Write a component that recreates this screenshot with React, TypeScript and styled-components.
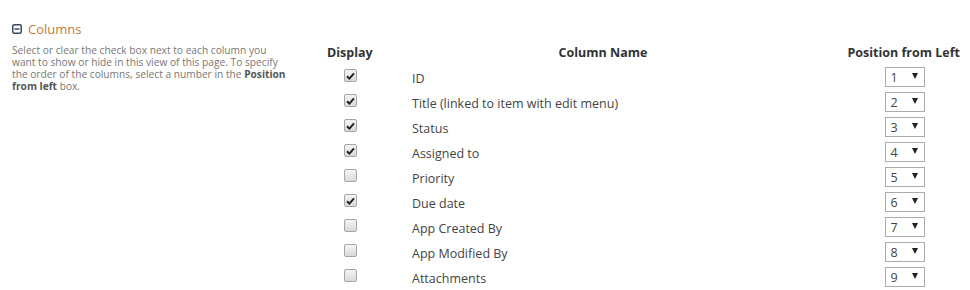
import React from 'react'
import styled, { createGlobalStyle } from 'styled-components'

const GlobalStyle = createGlobalStyle`
  html, body {
    margin: 0;
    padding: 0;
    background: #ffffff;
  }
  body {
    font-family: "Open Sans", "Liberation Sans", sans-serif;
  }
`

const Page = styled.div`
  width: 970px;
  height: 290px;
  overflow: hidden;
  display: flex;
  flex-direction: row;
  align-items: flex-start;
`

const Side = styled.div`
  width: 282px;
  padding: 20px 0 0 12px;
  box-sizing: content-box;
`

const SectionTitle = styled.div`
  display: flex;
  align-items: center;
  gap: 6px;
  color: #c47b3a;
  font-size: 13px;
  line-height: 18px;
`

const Description = styled.div`
  margin: 6px 0 0 0;
  color: #777777;
  font-size: 10.2px;
  line-height: 12px;
  white-space: nowrap;

  strong {
    color: #555555;
    font-weight: 700;
  }
`

const Line = styled.div`
  height: 12px;
`

const Table = styled.div`
  margin: 44px 0 0 33px;
  display: grid;
  grid-template-columns: 46px 460px 127px;
  grid-template-rows: 19px;
  grid-auto-rows: 25px;
  width: 633px;
`

const HeadCell = styled.div<{ $align: 'left' | 'center' | 'right' }>`
  font-weight: 700;
  font-size: 12.5px;
  color: #333333;
  text-align: ${p => p.$align};
  white-space: nowrap;
  line-height: 18px;
`

const Row = styled.div`
  display: contents;
`

const CheckCell = styled.div`
  display: flex;
  justify-content: center;
  align-items: flex-start;
  padding-top: 6px;
`

const NameCell = styled.div`
  padding: 8px 0 0 39px;
  font-size: 12.5px;
  line-height: 16px;
  color: #444444;
  white-space: nowrap;
`

const PosCell = styled.div`
  display: flex;
  justify-content: center;
  align-items: flex-start;
  padding: 4px 0 0 16px;
`

const Box = styled.span`
  width: 11px;
  height: 11px;
  border: 1px solid #a6a6a6;
  border-radius: 2px;
  background: linear-gradient(#f4f4f4, #d9d9d9);
  display: flex;
  align-items: center;
  justify-content: center;
`

const Select = styled.div`
  width: 27px;
  height: 18px;
  border: 1px solid #ababab;
  background: #ffffff;
  display: flex;
  align-items: center;
  justify-content: space-between;
  padding: 0 6px 0 5px;
  box-sizing: content-box;
  font-size: 12.5px;
  color: #444444;
`

const Arrow = styled.span`
  width: 0;
  height: 0;
  border-left: 3.5px solid transparent;
  border-right: 3.5px solid transparent;
  border-top: 6px solid #222222;
  margin-top: -2px;
`

const columns: { name: string; checked: boolean }[] = [
  { name: 'ID', checked: true },
  { name: 'Title (linked to item with edit menu)', checked: true },
  { name: 'Status', checked: true },
  { name: 'Assigned to', checked: true },
  { name: 'Priority', checked: false },
  { name: 'Due date', checked: true },
  { name: 'App Created By', checked: false },
  { name: 'App Modified By', checked: false },
  { name: 'Attachments', checked: false },
]

const Checkbox: React.FC<{ checked: boolean }> = ({ checked }) => (
  <Box>
    {checked && (
      <svg width="9" height="8" viewBox="0 0 9 8">
        <path d="M1 4.2 L3.4 6.6 L8 1.4" stroke="#222" strokeWidth="2" fill="none" />
      </svg>
    )}
  </Box>
)

const App: React.FC = () => {
  return (
    <Page>
      <GlobalStyle />
      <Side>
        <SectionTitle>
          <svg width="10" height="10" viewBox="0 0 10 10">
            <rect x="0.75" y="0.75" width="8.5" height="8.5" rx="1.5" stroke="#3b4660" strokeWidth="1.5" fill="none" />
            <path d="M2.5 5 H7.5" stroke="#3b4660" strokeWidth="1.5" />
          </svg>
          Columns
        </SectionTitle>
        <Description>
          <Line>Select or clear the check box next to each column you</Line>
          <Line>want to show or hide in this view of this page. To specify</Line>
          <Line>the order of the columns, select a number in the <strong>Position</strong></Line>
          <Line><strong>from left</strong> box.</Line>
        </Description>
      </Side>

      <Table>
        <HeadCell $align="left">Display</HeadCell>
        <HeadCell $align="center">Column Name</HeadCell>
        <HeadCell $align="right">Position from Left</HeadCell>
        {columns.map((c, i) => (
          <Row key={c.name}>
            <CheckCell>
              <Checkbox checked={c.checked} />
            </CheckCell>
            <NameCell>{c.name}</NameCell>
            <PosCell>
              <Select>
                {i + 1}
                <Arrow />
              </Select>
            </PosCell>
          </Row>
        ))}
      </Table>
    </Page>
  )
}

export default App
